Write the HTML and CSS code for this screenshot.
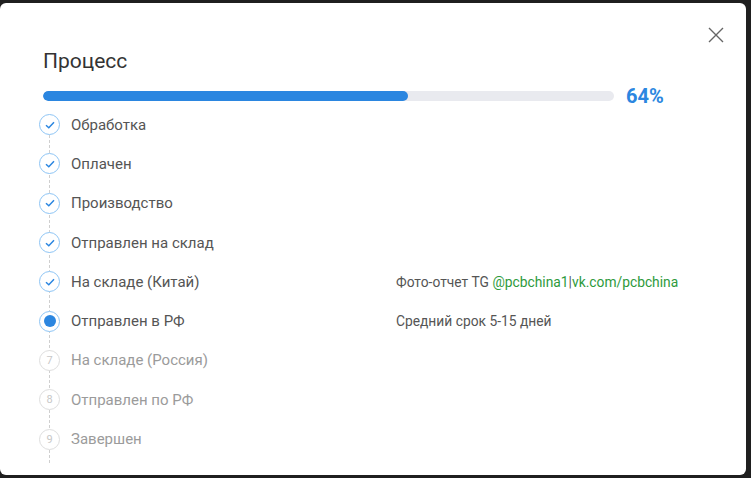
FILE: index.html
```html
<!DOCTYPE html>
<html lang="ru">
<head>
<meta charset="utf-8">
<title>Процесс</title>
<link rel="stylesheet" href="styles.css">
</head>
<body>
<div class="modal">
  <button class="close" aria-label="Закрыть">
    <svg width="16" height="16" viewBox="0 0 16 16"><path d="M1 1L15 15M15 1L1 15" stroke="#666" stroke-width="1.4" fill="none"/></svg>
  </button>
  <h2 class="title">Процесс</h2>
  <div class="progress">
    <div class="bar"><div class="fill" style="width:64%"></div></div>
    <span class="pct">64%</span>
  </div>
  <ol class="steps">
    <li class="step done"><span class="dot"><svg width="10" height="8" viewBox="0 0 10 8"><path d="M1 4.2L3.8 6.8L9 1.2" stroke="#2b86e0" stroke-width="1.5" fill="none"/></svg></span><span class="label">Обработка</span><span class="info"></span></li>
    <li class="step done"><span class="dot"><svg width="10" height="8" viewBox="0 0 10 8"><path d="M1 4.2L3.8 6.8L9 1.2" stroke="#2b86e0" stroke-width="1.5" fill="none"/></svg></span><span class="label">Оплачен</span><span class="info"></span></li>
    <li class="step done"><span class="dot"><svg width="10" height="8" viewBox="0 0 10 8"><path d="M1 4.2L3.8 6.8L9 1.2" stroke="#2b86e0" stroke-width="1.5" fill="none"/></svg></span><span class="label">Производство</span><span class="info"></span></li>
    <li class="step done"><span class="dot"><svg width="10" height="8" viewBox="0 0 10 8"><path d="M1 4.2L3.8 6.8L9 1.2" stroke="#2b86e0" stroke-width="1.5" fill="none"/></svg></span><span class="label">Отправлен на склад</span><span class="info"></span></li>
    <li class="step done"><span class="dot"><svg width="10" height="8" viewBox="0 0 10 8"><path d="M1 4.2L3.8 6.8L9 1.2" stroke="#2b86e0" stroke-width="1.5" fill="none"/></svg></span><span class="label">На складе (Китай)</span><span class="info">Фото-отчет TG <a href="#">@pcbchina1</a>|<a href="#">vk.com/pcbchina</a></span></li>
    <li class="step current"><span class="dot"><span class="inner"></span></span><span class="label">Отправлен в РФ</span><span class="info">Средний срок 5-15 дней</span></li>
    <li class="step todo"><span class="dot">7</span><span class="label">На складе (Россия)</span><span class="info"></span></li>
    <li class="step todo"><span class="dot">8</span><span class="label">Отправлен по РФ</span><span class="info"></span></li>
    <li class="step todo"><span class="dot">9</span><span class="label">Завершен</span><span class="info"></span></li>
  </ol>
</div>
</body>
</html>
```

FILE: styles.css
```css
* { box-sizing: border-box; }
html, body { margin: 0; padding: 0; }
body {
  background: #1f1f1f;
  font-family: Roboto, "Liberation Sans", Arial, sans-serif;
  width: 751px;
  height: 478px;
  overflow: hidden;
  padding-top: 3px;
}
.modal {
  position: relative;
  width: 746px;
  height: 472px;
  background: #fff;
  border-radius: 6px;
  padding: 44px 0 0 43px;
}
.close {
  position: absolute;
  top: 24px;
  right: 22px;
  width: 16px;
  height: 16px;
  padding: 0;
  border: 0;
  background: none;
  display: flex;
}
.title {
  margin: 0;
  font-size: 21px;
  line-height: 28px;
  font-weight: 400;
  color: #333;
}
.progress {
  display: flex;
  align-items: center;
  gap: 12px;
  margin-top: 11px;
  height: 20px;
}
.bar {
  width: 571px;
  height: 10px;
  border-radius: 5px;
  background: #e9eaef;
  overflow: hidden;
}
.fill {
  height: 100%;
  background: #2b86e0;
  border-radius: 5px;
}
.pct {
  font-size: 20px;
  font-weight: 700;
  color: #2b86e0;
}
.steps {
  position: relative;
  list-style: none;
  margin: -1px 0 0 -4px;
  padding: 0;
}
.steps::before {
  content: "";
  position: absolute;
  left: 10px;
  top: 20px;
  height: 338px;
  border-left: 1px dashed #cfcfcf;
}
.step {
  display: grid;
  grid-template-columns: 21px 314px 1fr;
  column-gap: 11px;
  align-items: center;
  height: 39.3px;
}
.dot {
  position: relative;
  width: 21px;
  height: 21px;
  border-radius: 50%;
  background: #fff;
  border: 1px solid #8ec5f5;
  display: flex;
  align-items: center;
  justify-content: center;
}
.label {
  font-size: 15px;
  color: #555;
}
.info {
  font-size: 13.8px;
  color: #555;
}
.info a {
  color: #2e9a3c;
  text-decoration: none;
}
.current .inner {
  width: 12px;
  height: 12px;
  border-radius: 50%;
  background: #2b86e0;
}
.todo .dot {
  border-color: #dedede;
  color: #c8c8c8;
  font-size: 11px;
}
.todo .label {
  color: #9b9b9b;
}
```
